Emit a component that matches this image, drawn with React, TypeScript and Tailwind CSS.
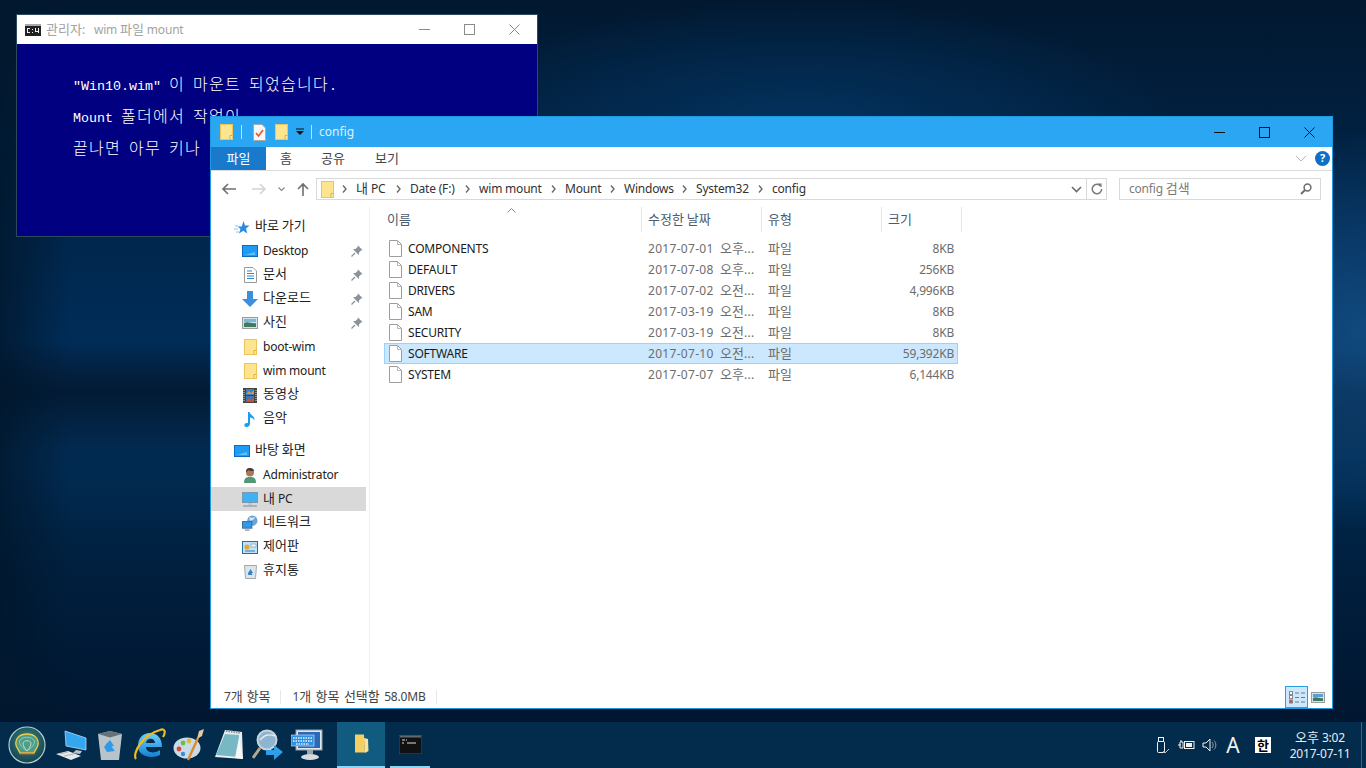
import React from 'react';

const uiFont = "font-['Noto_Sans','Noto_Sans_CJK_KR',sans-serif]";

// hangul runs are set a bit larger so their advance matches the 12px-cell font of the reference
const T: React.FC<{ children: string; wide?: boolean }> = ({ children, wide }) => (
  <>
    {children.split(/([\uAC00-\uD7A3]+)/).map((part, i) =>
      i % 2 === 1 ? (
        <span key={i} className="text-[13px]">{part}</span>
      ) : (
        <span key={i} className={wide ? 'tracking-[0.3px] [word-spacing:3px]' : 'tracking-[-0.2px]'}>{part}</span>
      )
    )}
  </>
);

// console text: 8px half cell, 16px full cell
const Con: React.FC<{ children: string }> = ({ children }) => (
  <p className="h-[22px] whitespace-pre leading-[22px]">
    {children.split(/([\uAC00-\uD7A3]+)/).map((part, i) =>
      i % 2 === 1 ? (
        <span key={i} className="text-[16px] font-light tracking-[1.28px]">{part}</span>
      ) : (
        <span key={i} className="text-[13.33px]">{part}</span>
      )
    )}
  </p>
);

const Folder: React.FC<{ w?: number; h?: number }> = ({ w = 13, h = 16 }) => (
  <svg width={w} height={h} viewBox={`0 0 13 ${h}`} className="shrink-0">
    <rect x="0.5" y="0.5" width="12" height={h - 1} fill="#fde590" stroke="#eec559" />
    <path d={`M10 ${h - 0.5}V${h - 4.5}H12.5`} fill="#fff3c0" stroke="#e0ae37" />
  </svg>
);

const FileIcon = () => (
  <svg width="13" height="17" viewBox="0 0 13 17" className="shrink-0">
    <path d="M0.5 0.5H8.5L12.5 4.5V16.5H0.5Z" fill="#fff" stroke="#9d9d9d" />
    <path d="M8.5 0.5V4.5H12.5" fill="none" stroke="#b5b5b5" />
  </svg>
);

const Pin = () => (
  <svg width="12" height="12" viewBox="0 0 12 12" className="absolute right-[3px] top-[6px]">
    <path d="M7 0.5L11.5 5L10 5.5L8 7.5L7.7 10L2 4.3L4.5 4L6.5 2Z" fill="#8b929a" />
    <path d="M4 8L0.5 11.5" stroke="#8b929a" strokeWidth="1.2" />
  </svg>
);

const Desktop = () => (
  <svg width="16" height="12" viewBox="0 0 16 12">
    <rect x="0" y="0" width="16" height="12" fill="#0a6cc4" />
    <rect x="1" y="1" width="14" height="10" fill="#1e9cf5" />
    <path d="M3 10L13 7V10Z" fill="#5fc0fa" />
  </svg>
);

const NavIcon: React.FC<{ name: string }> = ({ name }) => {
  switch (name) {
    case 'star':
      return (
        <svg width="16" height="15" viewBox="0 0 16 15">
          <path d="M9.5 1L11 5.5H15.5L12 8.5L13.3 13.5L9.3 10.7L5 13.5L6.5 9L3.5 6.5H7.8Z" fill="#2a8ae0" />
          <path d="M1 6H4M0 9H4M2 12H5" stroke="#8cc4ef" strokeWidth="1" />
        </svg>
      );
    case 'desktop':
      return <Desktop />;
    case 'doc':
      return (
        <svg width="13" height="16" viewBox="0 0 13 16">
          <path d="M0.5 0.5H9L12.5 4V15.5H0.5Z" fill="#fff" stroke="#9a9a9a" />
          <path d="M3 4H8M3 6.5H10M3 9H10M3 11.5H10" stroke="#2b8ad6" strokeWidth="1" />
        </svg>
      );
    case 'down':
      return (
        <svg width="16" height="16" viewBox="0 0 16 16">
          <path d="M5 0H11V8H16L8 16L0 8H5Z" fill="#3c8fdc" />
        </svg>
      );
    case 'pic':
      return (
        <svg width="16" height="12" viewBox="0 0 16 12">
          <rect x="0.5" y="0.5" width="15" height="11" fill="#cfe4ef" stroke="#9c9c9c" />
          <path d="M2 6C6 4 10 7 14 6V10H2Z" fill="#3d7a62" />
          <rect x="2" y="2" width="12" height="3" fill="#7fb6dc" />
        </svg>
      );
    case 'folder':
      return <Folder />;
    case 'film':
      return (
        <svg width="14" height="15" viewBox="0 0 14 15">
          <rect width="14" height="15" fill="#444" />
          <rect x="3" y="1" width="8" height="6" fill="#3f7fc0" />
          <rect x="3" y="8" width="8" height="6" fill="#3978b8" />
          <path d="M3 6L6 3L8 5L11 2V6Z" fill="#d89b34" />
          <path d="M3 13L6 10L8 12L11 9V13Z" fill="#c9503a" />
          <path d="M1 2V13M13 2V13" stroke="#ddd" strokeWidth="1" strokeDasharray="1 1" />
        </svg>
      );
    case 'music':
      return (
        <svg width="12" height="16" viewBox="0 0 12 16">
          <path d="M4 1H5.5C6 4 11 5 10.5 9.5C9.5 7.5 7.5 6.5 6 6.5V13C6 15 4 16 2.5 16C0.5 16 0 14.5 0.5 13.5C1 12.3 3 11.7 4 12.2Z" fill="#1b9cef" />
        </svg>
      );
    case 'user':
      return (
        <svg width="14" height="16" viewBox="0 0 14 16">
          <path d="M1 16C1 11 3 10 7 10C11 10 13 11 13 16Z" fill="#4f9a74" />
          <circle cx="7" cy="5.5" r="4" fill="#a8795a" />
          <path d="M3 5C3 1 5.5 1 7 1C9 1 11 2 11 4C9 4 6 4 5 3C4.5 4 4 5 3 5Z" fill="#4a3a30" />
        </svg>
      );
    case 'pc':
      return (
        <svg width="16" height="15" viewBox="0 0 16 15">
          <rect x="0.5" y="0.5" width="15" height="10" fill="#3fb2f6" stroke="#7b99ad" />
          <path d="M6 11H10V13H6Z" fill="#b8c6d0" />
          <path d="M1 14H15" stroke="#8ea3b2" strokeWidth="1.4" />
        </svg>
      );
    case 'net':
      return (
        <svg width="17" height="16" viewBox="0 0 17 16">
          <circle cx="11" cy="5.5" r="5.5" fill="#6aa6d8" />
          <path d="M8 2C11 3 13 2 14 1.5C13 4 11 6 8 5Z" fill="#d9e9f5" />
          <rect x="0.5" y="6.5" width="10" height="7" fill="#2e9aea" stroke="#3a6c94" />
          <path d="M3 15.5H8" stroke="#668" strokeWidth="1" />
        </svg>
      );
    case 'panel':
      return (
        <svg width="16" height="13" viewBox="0 0 16 13">
          <rect x="0.5" y="0.5" width="15" height="12" fill="#bfe2f7" stroke="#1f6fa8" />
          <circle cx="5" cy="6" r="2.6" fill="#e8a33a" />
          <rect x="9" y="3" width="5" height="3" fill="#f3f3f3" stroke="#4a8cc0" strokeWidth="0.5" />
          <path d="M3 10H13" stroke="#2a7fc0" />
        </svg>
      );
    case 'bin':
      return (
        <svg width="13" height="15" viewBox="0 0 13 15">
          <path d="M0.5 1.5H12.5L11.5 14.5H1.5Z" fill="#dfe4e8" stroke="#a0a8ae" />
          <path d="M6.5 5L9 9H7.5L8.5 11H4.5L3.8 9.5L6 6Z" fill="#2a84cf" />
        </svg>
      );
    default:
      return null;
  }
};

const navGroups = [
  [
    { label: '바로 가기', icon: 'star', top: true },
    { label: 'Desktop', icon: 'desktop', pin: true },
    { label: '문서', icon: 'doc', pin: true },
    { label: '다운로드', icon: 'down', pin: true },
    { label: '사진', icon: 'pic', pin: true },
    { label: 'boot-wim', icon: 'folder' },
    { label: 'wim mount', icon: 'folder' },
    { label: '동영상', icon: 'film' },
    { label: '음악', icon: 'music' },
  ],
  [
    { label: '바탕 화면', icon: 'desktop', top: true },
    { label: 'Administrator', icon: 'user' },
    { label: '내 PC', icon: 'pc', active: true },
    { label: '네트워크', icon: 'net' },
    { label: '제어판', icon: 'panel' },
    { label: '휴지통', icon: 'bin' },
  ],
];

const files = [
  { name: 'COMPONENTS', date: '2017-07-01 오후...', size: '8KB' },
  { name: 'DEFAULT', date: '2017-07-08 오후...', size: '256KB' },
  { name: 'DRIVERS', date: '2017-07-02 오전...', size: '4,996KB' },
  { name: 'SAM', date: '2017-03-19 오전...', size: '8KB' },
  { name: 'SECURITY', date: '2017-03-19 오전...', size: '8KB' },
  { name: 'SOFTWARE', date: '2017-07-10 오전...', size: '59,392KB', selected: true },
  { name: 'SYSTEM', date: '2017-07-07 오후...', size: '6,144KB' },
];

const crumbs = [
  { label: '내 PC', w: 'w-[54px]' },
  { label: 'Date (F:)', w: 'w-[69px]' },
  { label: 'wim mount', w: 'w-[86px]' },
  { label: 'Mount', w: 'w-[59px]' },
  { label: 'Windows', w: 'w-[72px]' },
  { label: 'System32', w: 'w-[76px]' },
  { label: 'config', w: 'w-[50px]' },
];

const Chevron = () => (
  <svg width="5" height="8" viewBox="0 0 5 8" className="shrink-0">
    <path d="M1 0.5L4 4L1 7.5" fill="none" stroke="#6b6b6b" strokeWidth="1.4" />
  </svg>
);

const WinControls: React.FC<{ color: string }> = ({ color }) => (
  <div className="flex h-full items-center">
    <div className="flex w-[45px] justify-center">
      <svg width="11" height="11" viewBox="0 0 11 11"><path d="M0 5.5H11" stroke={color} /></svg>
    </div>
    <div className="flex w-[45px] justify-center">
      <svg width="11" height="11" viewBox="0 0 11 11"><rect x="0.5" y="0.5" width="10" height="10" fill="none" stroke={color} /></svg>
    </div>
    <div className="flex w-[45px] justify-center">
      <svg width="11" height="11" viewBox="0 0 11 11"><path d="M0.5 0.5L10.5 10.5M10.5 0.5L0.5 10.5" stroke={color} /></svg>
    </div>
  </div>
);

const CmdWindow = () => (
  <div className="absolute left-[16px] top-[14px] flex h-[223px] w-[522px] flex-col border border-[#2b4a5c] bg-[#000080]">
    <div className={`flex h-[29px] items-center justify-between bg-white pl-[8px] ${uiFont} text-[12px] text-[#a3a3a3]`}>
      <div className="flex items-center">
        <svg width="16" height="12" viewBox="0 0 16 12" className="mr-[5px]">
          <rect width="16" height="12" fill="#222" />
          <rect x="0" y="0" width="16" height="2" fill="#aaa" />
          <path d="M2 4H5V5H3V8H5V9H2ZM7 5H8V6H7ZM7 8H8V9H7ZM10 4H11V7H13V4H14V9H13V8H10ZM10 9H14" fill="#eee" />
        </svg>
        <span><T>관리자:</T></span>
        <span className="ml-[9px]"><T>wim 파일 mount</T></span>
      </div>
      <WinControls color="#8a8a8a" />
    </div>
    <div className="flex flex-col gap-[10px] pl-[56px] pt-[31px] font-['Liberation_Mono','Noto_Sans_CJK_KR',monospace] text-white">
      <Con>{'"Win10.wim" 이 마운트 되었습니다.'}</Con>
      <Con>Mount 폴더에서 작업이</Con>
      <Con>끝나면 아무 키나</Con>
    </div>
  </div>
);

const TitleBar = () => (
  <div className="flex h-[30px] items-center justify-between bg-[#2aa6f2] pl-[9px]">
    <div className="flex items-center">
      <Folder w={13} h={16} />
      <div className="ml-[8px] h-[14px] w-px bg-[#bfe2f9]" />
      <svg width="13" height="17" viewBox="0 0 13 17" className="ml-[11px]">
        <path d="M0.5 0.5H9L12.5 4V16.5H0.5Z" fill="#f7f7f7" stroke="#a9a9a9" />
        <path d="M3 9L5.5 12L10 6" fill="none" stroke="#e2572b" strokeWidth="1.6" />
      </svg>
      <div className="ml-[9px]"><Folder w={13} h={16} /></div>
      <svg width="8" height="8" viewBox="0 0 8 8" className="ml-[8px]">
        <path d="M0 1H8" stroke="#111" />
        <path d="M0 3H8L4 7Z" fill="#111" />
      </svg>
      <div className="ml-[7px] h-[14px] w-px bg-[#bfe2f9]" />
      <span className={`ml-[7px] ${uiFont} text-[12px] text-[#dff1fd]`}>config</span>
    </div>
    <WinControls color="#111" />
  </div>
);

const Ribbon = () => (
  <div className={`flex h-[24px] items-stretch border-b border-[#dcdcdc] bg-white ${uiFont} text-[12px] text-[#444]`}>
    <div className="flex h-[23px] w-[55px] items-center justify-center bg-[#1979ca] text-white"><T>파일</T></div>
    <span className="ml-[14px] flex w-[12px] items-center"><T>홈</T></span>
    <span className="ml-[29px] flex items-center"><T>공유</T></span>
    <span className="ml-[30px] flex items-center"><T>보기</T></span>
    <div className="ml-auto flex items-center gap-[8px] pr-[2px]">
      <svg width="12" height="7" viewBox="0 0 12 7">
        <path d="M1 1L6 6L11 1" fill="none" stroke="#b5b5b5" />
      </svg>
      <div className="flex h-[15px] w-[15px] items-center justify-center rounded-full bg-[#0e6fc6] text-[11px] font-bold text-white">?</div>
    </div>
  </div>
);

const AddressRow = () => (
  <div className={`flex h-[36px] items-center ${uiFont} text-[12px] text-[#333]`}>
    <div className="flex w-[105px] items-center">
      <svg width="16" height="12" viewBox="0 0 16 12" className="ml-[10px]">
        <path d="M15 6H2M7 1L2 6L7 11" fill="none" stroke="#6f6f6f" strokeWidth="1.6" />
      </svg>
      <svg width="16" height="12" viewBox="0 0 16 12" className="ml-[14px]">
        <path d="M1 6H14M9 1L14 6L9 11" fill="none" stroke="#d4d4d4" strokeWidth="1.6" />
      </svg>
      <svg width="7" height="5" viewBox="0 0 7 5" className="ml-[11px]">
        <path d="M0.5 0.5L3.5 3.5L6.5 0.5" fill="none" stroke="#8a8a8a" strokeWidth="1.2" />
      </svg>
      <svg width="12" height="14" viewBox="0 0 12 14" className="ml-[12px]">
        <path d="M6 14V2M1 7L6 2L11 7" fill="none" stroke="#6f6f6f" strokeWidth="1.6" />
      </svg>
    </div>
    <div className="flex h-[22px] w-[791px] items-center border border-[#d9d9d9] pl-[4px]">
      <Folder w={13} h={17} />
      <div className="ml-[8px] flex items-center">
        {crumbs.map((c) => (
          <div key={c.label} className={`flex items-center ${c.w}`}>
            <Chevron />
            <span className="ml-[9px] whitespace-nowrap"><T>{c.label}</T></span>
          </div>
        ))}
      </div>
      <div className="ml-auto flex h-full items-center">
        <svg width="11" height="7" viewBox="0 0 11 7" className="mr-[4px]">
          <path d="M1 1L5.5 5.5L10 1" fill="none" stroke="#6b6b6b" strokeWidth="1.6" />
        </svg>
        <div className="flex h-full w-[20px] items-center justify-center border-l border-[#d9d9d9]">
          <svg width="12" height="12" viewBox="0 0 12 12">
            <path d="M9.8 3.2A4.7 4.7 0 1 0 10.7 6" fill="none" stroke="#7a7a7a" strokeWidth="1.5" />
            <path d="M6.5 0.5L10.5 0.5L10.5 4.5Z" fill="#7a7a7a" />
          </svg>
        </div>
      </div>
    </div>
    <div className="ml-[12px] flex h-[22px] w-[202px] items-center justify-between border border-[#d9d9d9] pl-[9px] pr-[8px] text-[#7b7b7b]">
      <span><T>config 검색</T></span>
      <svg width="12" height="12" viewBox="0 0 12 12">
        <circle cx="7.5" cy="4.5" r="3.4" fill="none" stroke="#6d6d6d" strokeWidth="1.5" />
        <path d="M5 7L1 11" stroke="#6d6d6d" strokeWidth="2" />
      </svg>
    </div>
  </div>
);

const Sidebar = () => (
  <div className={`flex w-[159px] shrink-0 flex-col gap-[8px] border-r border-[#efefef] pt-[8px] ${uiFont} text-[12px] text-[#222]`}>
    {navGroups.map((group, i) => (
      <div key={i} className="flex flex-col pr-[3px]">
        {group.map((item) => (
          <div key={item.label} className={`relative flex h-[24px] items-center ${item.active ? 'bg-[#d9d9d9]' : ''}`}>
            <div className={`flex w-[16px] justify-center ${item.top ? 'ml-[23px]' : 'ml-[31px]'}`}>
              <NavIcon name={item.icon} />
            </div>
            <span className={`ml-[5px] ${/^[\uAC00-\uD7A3 ]+$/.test(item.label) ? '-translate-y-px' : ''}`}><T>{item.label}</T></span>
            {item.pin && <Pin />}
          </div>
        ))}
      </div>
    ))}
  </div>
);

const FileList = () => (
  <div className={`relative flex-1 pl-[14px] ${uiFont} text-[12px]`}>
    <svg width="9" height="5" viewBox="0 0 9 5" className="absolute left-[137px] top-[1px]">
      <path d="M0.5 4.5L4.5 0.5L8.5 4.5" fill="none" stroke="#8a8a8a" />
    </svg>
    <div className="grid h-[25px] w-[578px] grid-cols-[258px_120px_120px_80px] items-stretch text-[#4c5c70]">
      <div className="flex items-center border-r border-[#e5e5e5] pl-[3px]"><span><T>이름</T></span></div>
      <div className="flex items-center border-r border-[#e5e5e5] pl-[6px]"><span><T>수정한 날짜</T></span></div>
      <div className="flex items-center border-r border-[#e5e5e5] pl-[6px]"><span><T>유형</T></span></div>
      <div className="flex items-center border-r border-[#e5e5e5] pl-[6px]"><span><T>크기</T></span></div>
    </div>
    <div className="mt-[6px] flex w-[574px] flex-col">
      {files.map((f) => (
        <div
          key={f.name}
          className={`grid h-[21px] grid-cols-[258px_120px_120px_74px] items-center border ${f.selected ? 'border-[#99d1ff] bg-[#cce8ff]' : 'border-transparent'}`}
        >
          <div className="flex items-center gap-[6px] pl-[4px] text-[#1a1a1a]">
            <FileIcon />
            <span><T>{f.name}</T></span>
          </div>
          <div className="pl-[5px] text-[#6d6d6d]"><T wide>{f.date}</T></div>
          <div className="pl-[5px] text-[#6d6d6d]"><T>파일</T></div>
          <div className="pr-[3px] text-right text-[#6d6d6d]"><T>{f.size}</T></div>
        </div>
      ))}
    </div>
  </div>
);

const StatusBar = () => (
  <div className={`flex h-[22px] items-center ${uiFont} text-[12px] text-[#444]`}>
    <span className="ml-[13px] [word-spacing:1px]"><T>7개 항목</T></span>
    <div className="ml-[10px] h-[14px] w-px bg-[#e8e8e8]" />
    <span className="ml-[11px] [word-spacing:1.5px]"><T>1개 항목 선택함 58.0MB</T></span>
    <div className="ml-[10px] h-[14px] w-px bg-[#e8e8e8]" />
    <div className="ml-auto mr-[7px] flex items-center gap-[3px]">
      <div className="flex h-[22px] w-[23px] items-center justify-center border border-[#2a9fe0] bg-[#cce8ff]">
        <svg width="16" height="13" viewBox="0 0 16 13">
          <rect x="0.5" y="0.5" width="3" height="3" fill="#fff" stroke="#888" />
          <rect x="0.5" y="4.5" width="3" height="3" fill="#fff" stroke="#888" />
          <rect x="0.5" y="9" width="3" height="3" fill="#e04040" stroke="#888" />
          <path d="M6 2H10M12 2H16M6 6.5H10M12 6.5H16M6 11H10M12 11H16" stroke="#777" />
        </svg>
      </div>
      <svg width="14" height="11" viewBox="0 0 14 11">
        <rect x="0.5" y="0.5" width="13" height="10" fill="#cfe4ef" stroke="#9c9c9c" />
        <rect x="2" y="2" width="10" height="3" fill="#5a9fd0" />
        <path d="M2 6C5 4 9 7 12 6V9H2Z" fill="#3d7a62" />
      </svg>
    </div>
  </div>
);

const ExplorerWindow = () => (
  <div className="absolute left-[210px] top-[116px] flex h-[593px] w-[1123px] flex-col border border-[#1e9ae0] bg-white">
    <TitleBar />
    <Ribbon />
    <AddressRow />
    <div className="flex min-h-0 flex-1">
      <Sidebar />
      <FileList />
    </div>
    <StatusBar />
  </div>
);

const TaskIcons = () => (
  <div className="flex h-full items-center">
    {/* shell logo */}
    <svg width="38" height="38" viewBox="0 0 38 38" className="ml-[8px]">
      <defs>
        <radialGradient id="shellBg" cx="50%" cy="40%" r="60%">
          <stop offset="0%" stopColor="#3f8a86" />
          <stop offset="100%" stopColor="#14424f" />
        </radialGradient>
      </defs>
      <circle cx="19" cy="19" r="18" fill="url(#shellBg)" stroke="#b4cdd2" strokeWidth="1.2" />
      <path d="M8 19C7 12 12 8 19 8C26 8 31 12 30 19C29.5 22 27 24 26 27H12C11 24 8.5 22 8 19Z" fill="#4f9c8a" stroke="#f0cf45" strokeWidth="1.3" />
      <path d="M19 25C15 22 11 19 11.5 15C14 10 24 10 26.5 15C27 19 23 22 19 25Z" fill="none" stroke="#8fcfb0" strokeWidth="1" />
      <path d="M19 25C16.5 22 15 20 15 17C16 14 22 14 23 17C23 20 21.5 22 19 25Z" fill="none" stroke="#b9e0bd" strokeWidth="1" />
      <path d="M12 27.5H26" stroke="#e8792f" strokeWidth="1.6" />
    </svg>
    {/* computer */}
    <svg width="32" height="32" viewBox="0 0 32 32" className="ml-[10px]">
      <path d="M9 2L30 9V21L10 17Z" fill="#35a6f0" stroke="#cfe6f5" strokeWidth="0.7" />
      <path d="M20 21L26 22L24 25L17 24Z" fill="#b9c5cc" />
      <path d="M0 25L12 22L25 27L15 31Z" fill="#e4e8ea" />
      <path d="M4 25L12 23M8 27L18 25" stroke="#9aa4aa" strokeWidth="0.7" />
    </svg>
    {/* recycle bin */}
    <svg width="28" height="32" viewBox="0 0 28 32" className="ml-[8px]">
      <path d="M2 5L14 2L26 5L23 31H5Z" fill="#b9c4ca" />
      <path d="M2 5L14 8.5L26 5L14 2Z" fill="#667178" />
      <path d="M14 11L18 17L15.5 17.5L19 22L11 23L8 18L11 14Z" fill="#2f9be6" />
    </svg>
    {/* IE */}
    <svg width="32" height="34" viewBox="0 0 32 34" className="ml-[10px]">
      <defs>
        <linearGradient id="ieBlue" x1="0" y1="0" x2="0" y2="1">
          <stop offset="0%" stopColor="#6fd0f7" />
          <stop offset="100%" stopColor="#1282d6" />
        </linearGradient>
      </defs>
      <path d="M4 18C4 10 9 5 16 5C23 5 28 10 28 19H12C12 25 21 26 26 22V27C18 31 4 29 4 18ZM12 15H21C21 10 13 9 12 15Z" fill="url(#ieBlue)" />
      <path d="M2 31C-2 26 8 7 26 2C31 0 32 4 29 9" fill="none" stroke="#eebd1c" strokeWidth="2.2" />
    </svg>
    {/* palette */}
    <svg width="32" height="34" viewBox="0 0 32 34" className="ml-[7px]">
      <ellipse cx="14" cy="20" rx="13.5" ry="10.5" fill="#c9dbe6" />
      <circle cx="6" cy="21" r="2.4" fill="#d8483e" />
      <circle cx="10" cy="15" r="2.4" fill="#6dbb4b" />
      <circle cx="16" cy="13" r="2.4" fill="#e8b634" />
      <circle cx="10" cy="26" r="2.2" fill="#3a8fd4" />
      <path d="M15 32L25 10" stroke="#e08a2a" strokeWidth="2.4" />
      <path d="M24 11L26 3L31 1L29 8Z" fill="#e6c9a0" />
    </svg>
    {/* notepad */}
    <svg width="32" height="32" viewBox="0 0 32 32" className="ml-[8px]">
      <path d="M12 1L29 3L30 30L2 28Z" fill="#e9eef0" />
      <path d="M12 5L26 6L26 28L3 26Z" fill="#78b8c4" />
      <path d="M26 8L30 30L22 29Z" fill="#f6f7f7" />
      <path d="M13 2L28 4" stroke="#8a9297" strokeWidth="2" strokeDasharray="1.5 1" />
    </svg>
    {/* magnifier with arrow */}
    <svg width="32" height="34" viewBox="0 0 32 34" className="ml-[7px]">
      <circle cx="15" cy="12" r="9.5" fill="#8fb4d0" stroke="#c9d4da" strokeWidth="2" />
      <path d="M8 12C13 6 18 6 23 8" fill="none" stroke="#e8f1f6" strokeWidth="1.4" />
      <path d="M8 20L1 30" stroke="#b9a98a" strokeWidth="3" />
      <path d="M14 22H22V17L31 24L22 32V27H14Z" fill="#2d9fe8" />
    </svg>
    {/* keyboard monitor */}
    <svg width="32" height="32" viewBox="0 0 32 32" className="ml-[7px]">
      <rect x="5" y="1" width="26" height="20" fill="#dfe7ec" stroke="#8fa0ab" />
      <rect x="7" y="3" width="22" height="16" fill="#2c68b8" />
      <path d="M16 21H22V25H16Z" fill="#9aa6ad" />
      <ellipse cx="19" cy="28" rx="9" ry="3" fill="#d7dcdf" />
      <rect x="0" y="6" width="23" height="11" fill="#2f8fe0" stroke="#dcecf8" strokeWidth="0.6" />
      <path d="M2 9H21M2 12H21M5 15H18" stroke="#e8f3fb" strokeWidth="1.3" strokeDasharray="1.5 1" />
    </svg>
    <div className="ml-[14px] flex h-full w-[48px] items-center justify-center border-b-[2px] border-[#8dd4f5] bg-[#115a80]">
      <svg width="15" height="20" viewBox="0 0 15 20">
        <path d="M1 0.5H10L11 18.5H1Z" fill="#f6cf62" />
        <path d="M10 4L14 5L14.5 17L11 19L10 4Z" fill="#fbe49a" />
      </svg>
    </div>
    <div className="ml-[5px] flex h-full w-[40px] items-center justify-center border-b-[2px] border-[#8dd4f5]">
      <svg width="23" height="19" viewBox="0 0 23 19">
        <rect width="23" height="19" fill="#111" stroke="#4b5963" />
        <rect x="1" y="0.5" width="21" height="2" fill="#5e6a72" />
        <path d="M3 5H6M7 5H8M3 8H5M8 8H17" stroke="#ddd" />
      </svg>
    </div>
  </div>
);

const Tray = () => (
  <div className={`flex h-full items-center ${uiFont}`}>
    <svg width="13" height="17" viewBox="0 0 13 17">
      <rect x="0.5" y="4.5" width="7" height="11" rx="1" fill="none" stroke="#f2f2f2" />
      <rect x="1.5" y="0.5" width="5" height="4" fill="none" stroke="#f2f2f2" />
      <path d="M6 14L8 16L12 12" fill="none" stroke="#bcc6cc" />
    </svg>
    <svg width="17" height="12" viewBox="0 0 17 12" className="ml-[8px]">
      <rect x="6.5" y="2.5" width="9.5" height="7" fill="none" stroke="#f2f2f2" />
      <rect x="8" y="4" width="6" height="4" fill="#f2f2f2" />
      <path d="M0 6H3M2 3V9H5V3ZM3 3V1" fill="none" stroke="#f2f2f2" />
    </svg>
    <svg width="16" height="14" viewBox="0 0 16 14" className="ml-[7px]">
      <path d="M1 5H4L8 1V13L4 9H1Z" fill="none" stroke="#f2f2f2" />
      <path d="M10 4C11.5 6 11.5 8 10 10M12 2.5C14.5 5.5 14.5 8.5 12 11.5" fill="none" stroke="#8ea2ae" />
    </svg>
    <span className="ml-[4px] flex w-[22px] justify-center text-[21px] leading-none text-[#f2f2f2]">A</span>
    <span className="ml-[11px] flex h-[16px] w-[16px] items-center justify-center bg-white text-[13px] font-bold leading-none text-black">한</span>
    <div className="ml-[12px] flex w-[74px] flex-col items-center text-[12px] leading-[16px] text-[#e8eef2]">
      <span><T>오후 3:02</T></span>
      <span><T>2017-07-11</T></span>
    </div>
    <div className="ml-[4px] h-full w-px bg-[#2f6a8c]" />
    <div className="w-[4px]" />
  </div>
);

const App: React.FC = () => {
  return (
    <div className="flex h-[768px] w-[1366px] flex-col overflow-hidden bg-[#021a38]">
      <div className="relative flex-1 bg-[radial-gradient(ellipse_240px_200px_at_1366px_330px,#11497e_0%,transparent_100%),radial-gradient(ellipse_380px_130px_at_800px_130px,#03335f_0%,transparent_100%),linear-gradient(90deg,#01172dcc_0px,transparent_70px),linear-gradient(180deg,#021830_0px,#00274d_240px,#002d58_340px,#032040_372px,#021b35_392px,#022a50_450px,#012a50_480px,#00203f_560px,#011630_722px)]">
        <CmdWindow />
        <ExplorerWindow />
      </div>
      <div className="flex h-[46px] shrink-0 items-stretch justify-between bg-[#032b4b]">
        <TaskIcons />
        <Tray />
      </div>
    </div>
  );
};

export default App;
